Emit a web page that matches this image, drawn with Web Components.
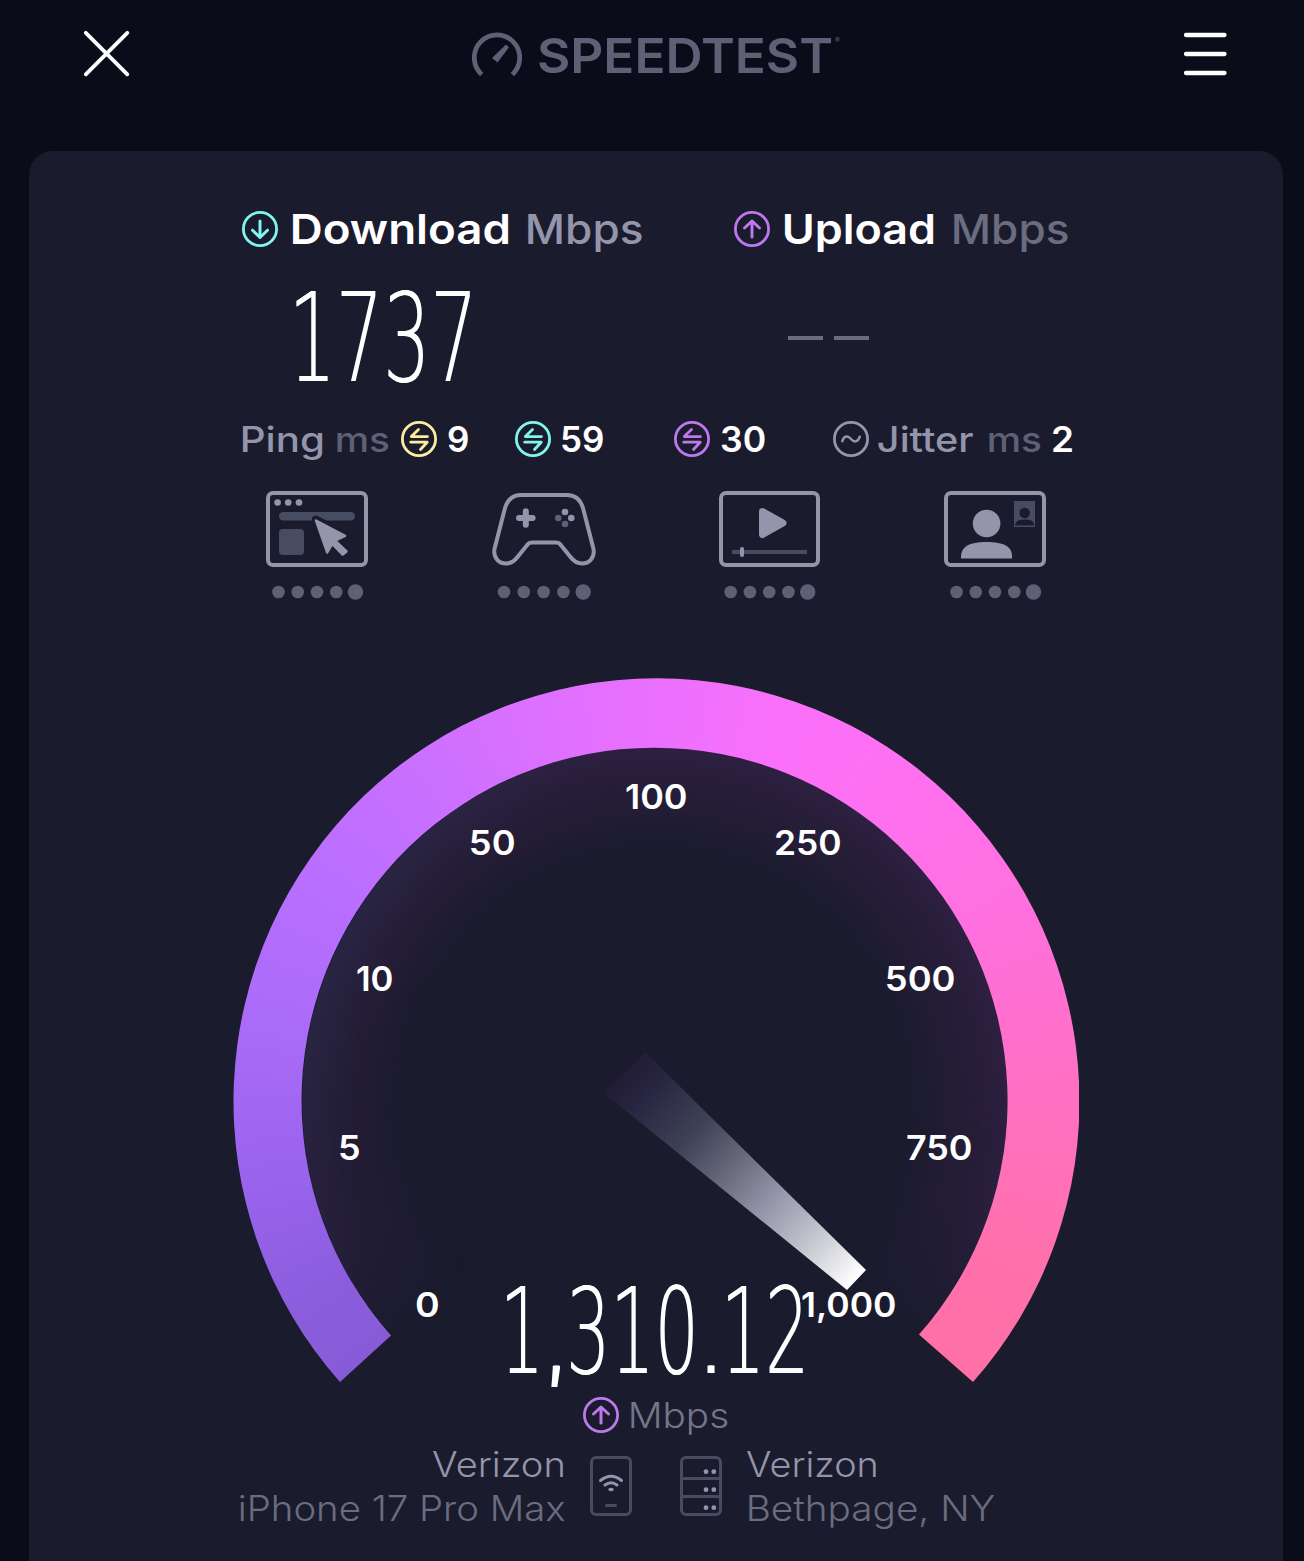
<!DOCTYPE html>
<html lang="en">
<head>
<meta charset="utf-8">
<title>Speedtest</title>
<style>
html{background:#0a0c1a}
body{margin:0;color:#fff;font-family:Inter,"Liberation Sans",sans-serif}
</style>
</head>
<body>
<speed-app></speed-app>
<script>
const ctx = document.createElement('canvas').getContext('2d');

function define(name, html, after) {
  const t = document.createElement('template');
  t.innerHTML = html;
  customElements.define(name, class extends HTMLElement {
    connectedCallback() {
      if (this.shadowRoot) return;
      this.attachShadow({mode: 'open'}).append(t.content.cloneNode(true));
      if (after) after(this, this.shadowRoot);
    }
  });
}

/* Text whose ink spans exactly w pixels; the host's bottom edge is the baseline. */
define('fit-text', `<style>
:host{display:block;flex:none}
:host([digits]){text-shadow:1.300px 0 currentColor}
span{display:block;width:max-content;white-space:pre;transform-origin:0 0}
</style><span><slot></slot></span>`, (el, root) => {
  const a = (n, d) => el.getAttribute(n) || d;
  const digits = el.hasAttribute('digits');
  const w = +a('w'), h = +a('h', 26), size = +a('size', 35), weight = a('weight', 570);
  const family = digits ? '"DejaVu Sans"' : 'Inter';
  ctx.font = weight + ' ' + size + 'px ' + family + ', sans-serif';
  const m = ctx.measureText(el.textContent);
  const s = w / (m.actualBoundingBoxLeft + m.actualBoundingBoxRight);
  const lh = Math.round(size * (digits ? .8 : 1.2));
  const base = (lh + m.fontBoundingBoxAscent - m.fontBoundingBoxDescent) / 2;
  el.style.width = w + 'px';
  el.style.height = h + 'px';
  if (a('c')) el.style.color = a('c');
  const sp = root.querySelector('span');
  sp.style.font = weight + ' ' + size + 'px/' + lh + 'px ' + family + ', sans-serif';
  sp.style.transform = 'translate(' + m.actualBoundingBoxLeft * s + 'px,' + (h - base) + 'px) scaleX(' + s + ')';
});

const glyphs = {
  down: '<path d="M18 10v16M10.500 19.200l7.500 7.300 7.500-7.300"/>',
  up: '<path d="M18 26V10M10.500 17l7.500-7 7.500 7"/>',
  ping: '<path d="M26.500 15.600H10.300L17.500 8.500M9.700 21.200H26.200L19.500 28.500" stroke-width="2.800"/>',
  wave: '<path d="M9.300 20.200c2-6 5.800-5.500 8.700-2.200s6.700 3.800 8.800-2.300" stroke-width="2.500"/>'
};
define('ring-icon', `<style>
:host{display:block;flex:none;width:36px;height:36px}svg{display:block}
</style><svg width="36" height="36" fill="none" stroke="currentColor" stroke-width="3" stroke-linecap="round" stroke-linejoin="round"><circle cx="18" cy="18" r="16.600" stroke-width="2.800"/><g></g></svg>`,
(el, root) => {
  el.style.color = el.getAttribute('c');
  root.querySelector('g').innerHTML = glyphs[el.getAttribute('kind')];
});

define('app-header', `<style>
:host{display:flex;height:151px;box-sizing:border-box;padding:30px 77px 0 83px;align-items:flex-start;justify-content:space-between}
svg{display:block;flex:none}
.logo{display:flex;align-items:flex-start;color:#5f6075;margin-left:-1px}
.logo svg{margin-top:1px}
.name{margin:8px 0 0 17px}.reg{margin:8px 0 0 3px}
.menu{margin-top:2px}
</style>
<svg width="47" height="47" stroke="#fff" stroke-width="3.800" stroke-linecap="round"><path d="M2.800 2.800l41.500 41.500M44.300 2.800L2.800 44.300"/></svg>
<div class="logo">
<svg width="50" height="50" fill="none"><path d="M9.700 43.400A22.700 22.700 0 1 1 40.300 43.400" stroke="#5f6075" stroke-width="4.800"/><path d="M34 13.500l3 2.800L25.500 31.500 20 27z" fill="#5f6075"/></svg>
<fit-text class="name" w="293" h="35" size="48.500">SPEEDTEST</fit-text>
<fit-text class="reg" w="5" h="5" size="7" weight="500">®</fit-text>
</div>
<svg class="menu" width="44" height="45" stroke="#fff" stroke-width="4.300" stroke-linecap="round"><path d="M3 3h38.500M3 22h38.500M3 41h38.500"/></svg>`);

define('speed-results', `<style>
:host{display:block;padding:60px 0 0 213px}
.row{display:flex;align-items:center}
.values{display:flex;align-items:center;margin-top:44px;padding-left:54px;height:90px}
.pending{display:flex;gap:11px;margin-left:319px;margin-top:4px}
.pending i{width:35px;height:4px;background:#6b6c80}
.ping{margin-top:40px;margin-left:-1px}
</style>
<div class="row">
<ring-icon kind="down" c="#80f5ee"></ring-icon>
<fit-text style="margin-left:15px" w="216" h="30" size="41.500">Download</fit-text>
<fit-text style="margin-left:19px" w="114" h="30" size="41.500" weight="550" c="#9495aa">Mbps</fit-text>
<ring-icon style="margin-left:92px" kind="up" c="#bd78ee"></ring-icon>
<fit-text style="margin-left:15px" w="149" h="30" size="41.500">Upload</fit-text>
<fit-text style="margin-left:20px" w="114" h="30" size="41.500" weight="550" c="#6b6c80">Mbps</fit-text>
</div>
<div class="values">
<fit-text w="173" h="90" size="123.500" weight="200" digits>1737</fit-text>
<div class="pending"><i></i><i></i></div>
</div>
<div class="row ping">
<fit-text w="81" c="#9495aa" weight="530" style="margin-left:1px">Ping</fit-text>
<fit-text w="52" c="#5f6075" weight="530" style="margin-left:14px">ms</fit-text>
<ring-icon kind="ping" c="#fbeca0" style="margin-left:12px"></ring-icon>
<fit-text w="20" style="margin-left:11px">9</fit-text>
<ring-icon kind="ping" c="#80f5ee" style="margin-left:47px"></ring-icon>
<fit-text w="41" style="margin-left:11px">59</fit-text>
<ring-icon kind="ping" c="#bd78ee" style="margin-left:71px"></ring-icon>
<fit-text w="44" style="margin-left:11px">30</fit-text>
<ring-icon kind="wave" c="#9495aa" style="margin-left:68px"></ring-icon>
<fit-text w="95" c="#9495aa" weight="530" style="margin-left:9px">Jitter</fit-text>
<fit-text w="52" c="#5f6075" weight="530" style="margin-left:16px">ms</fit-text>
<fit-text w="19" style="margin-left:12px">2</fit-text>
</div>`);

const art = {
  web: '<rect x="2" y="2" width="98" height="72" rx="5"/><g stroke="none"><g fill="#9495aa"><circle cx="11.600" cy="11.500" r="3.300"/><circle cx="22.200" cy="11.500" r="3.300"/><circle cx="33" cy="11.500" r="3.300"/></g><rect x="13" y="21" width="76" height="8.600" rx="4.300" fill="#484c60"/><rect x="13" y="38" width="25" height="26" rx="4" fill="#484c60"/><path d="M50 28.500L79 44.500 69.500 50 80.500 61 77 64.200 66.500 53.500 61.500 62z" fill="#1b1b2e" stroke="#1b1b2e" stroke-width="8" stroke-linejoin="round"/><path d="M50 29.500L79 44.800 69.200 49.700 80.500 60.500 76.700 63.600 66.200 52.800 61.200 61.500z" fill="#9495aa" stroke="#9495aa" stroke-width="2.500" stroke-linejoin="round"/></g>',
  game: '<path d="M29 4H75C83 4 88.500 9 91 17L101.500 58C103 67 97 72.500 90 72.500C85 72.500 81.500 70 78.500 66L68 53Q66.500 51.500 64 51.500H40Q37.500 51.500 36 53L25.500 66C22.500 70 19 72.500 14 72.500C7 72.500 1 67 2.500 58L13 17C15.500 9 21 4 29 4z"/><path d="M27 27h13.600M33.800 20.200v13.600" stroke-width="6" stroke-linecap="round"/><g stroke="none"><circle cx="73" cy="21" r="3.300" fill="#9495aa"/><circle cx="79.300" cy="27" r="3.300" fill="#9495aa"/><circle cx="66.300" cy="27" r="3.300" fill="#5f6075"/><circle cx="73" cy="33" r="3.300" fill="#5f6075"/></g>',
  video: '<rect x="2" y="2" width="97" height="72" rx="5"/><path d="M43.500 20.500L64 32 43.500 43.500z" fill="#9495aa" stroke-width="7" stroke-linejoin="round"/><path d="M13 61h75" stroke="#484c60"/><path d="M23 58v6" stroke-linecap="round"/>',
  chat: '<rect x="2" y="2" width="98" height="72" rx="5"/><g stroke="none"><circle cx="42.600" cy="32.500" r="13.800" fill="#9495aa"/><path d="M17 67.500c-.5-12 8-16.500 25.500-16.500S69 55.500 68 67.500z" fill="#9495aa"/><rect x="70" y="10" width="21" height="26" fill="#484c60"/><circle cx="80.700" cy="22" r="5.300" fill="#1b1b2e"/><path d="M71 34.600c0-4.500 4-6 9.700-6s9.300 1.500 9.300 6z" fill="#1b1b2e"/></g>'
};
define('quality-item', `<style>
:host{display:block;flex:none;width:104px}svg{display:block;overflow:visible}.dots{margin-top:17px;margin-left:6px}
</style><svg class="art" width="104" height="76" fill="none" stroke="#9495aa" stroke-width="4"></svg>
<svg class="dots" width="92" height="16" fill="#5f6075"></svg>`,
(el, root) => {
  root.querySelector('.art').innerHTML = art[el.getAttribute('kind')];
  const pitch = +(el.getAttribute('pitch') || 19.25), start = +(el.getAttribute('start') || 6.5);
  root.querySelector('.dots').innerHTML = [0, 1, 2, 3, 4].map(i =>
    '<circle cx="' + (start + i * pitch) + '" cy="8" r="' + (i === 4 ? 7.7 : 6.3) + '"/>').join('');
});

define('quality-row', `<style>
:host{display:flex;padding:34px 0 0 237px;gap:122px}
</style><quality-item kind="web"></quality-item><quality-item kind="game" start="6" pitch="19.800"></quality-item><quality-item kind="video" start="5.700" style="margin-left:1px"></quality-item><quality-item kind="chat" style="margin-left:-1px"></quality-item>`);

/* Dial canvas: 846 x 704, centre of the arc at 423,423. */
define('speed-gauge', `<style>
:host{display:block;position:relative;width:846px;height:704px;margin:78px 0 0 204px}
.arc,.glow,svg,fit-text{position:absolute}
.arc,.glow{left:0;top:0;width:846px;height:846px}
.arc{background:conic-gradient(from 228deg,#875bd8 0deg,#8b5ddd 12deg,#9963ec 30deg,#a96bf8 52deg,#b96eff 75deg,#cb70ff 98deg,#e070ff 118deg,#ec70fe 134deg,#fb70fa 152deg,#ff70f0 170deg,#ff70dc 196deg,#ff70c2 222deg,#ff70ac 245deg,#ff70a6 264deg,#ff70a6 300deg,#875bd8 330deg);
clip-path:path("M107 704A423 423 0 1 1 740 704L686 656.500A353 353 0 1 0 158 657.500Z")}
.glow{background:radial-gradient(circle at 423px 423px,#1b1b2e00 245px,#281e3880 300px,transparent 354px),radial-gradient(circle at 423px 423px,transparent 270px,#2f2042 353px,transparent 354px);-webkit-mask-image:conic-gradient(from 228deg,transparent 0deg,#0009 18deg,#000c 50deg,#000 85deg,#000 215deg,#000c 240deg,transparent 264deg);mask-image:conic-gradient(from 228deg,transparent 0deg,#0009 18deg,#000c 50deg,#000 85deg,#000 215deg,#000c 240deg,transparent 264deg)}
.cool{background:radial-gradient(circle at 423px 423px,transparent 300px,#272643 353px,transparent 354px);-webkit-mask-image:conic-gradient(from 228deg,transparent 10deg,#000c 50deg,#000c 85deg,transparent 125deg);mask-image:conic-gradient(from 228deg,transparent 10deg,#000c 50deg,#000c 85deg,transparent 125deg)}
svg{left:0;top:0}
.mark{text-shadow:2px 0,4px 0,6px 0}
</style>
<div class="glow"></div><div class="glow cool"></div><div class="arc"></div>
<svg width="846" height="704"><defs><linearGradient id="n" gradientUnits="userSpaceOnUse" x1="390" y1="394" x2="623" y2="602"><stop offset="0" stop-color="#231c34"/><stop offset=".1" stop-color="#272541"/><stop offset=".3" stop-color="#3f4256"/><stop offset=".43" stop-color="#5f6173"/><stop offset=".63" stop-color="#9495a8"/><stop offset=".82" stop-color="#c7c8d1"/><stop offset="1" stop-color="#fff"/></linearGradient></defs>
<path d="M412 374L633 592 614 612 371 415Z" fill="url(#n)"/></svg>
<fit-text style="left:183px;top:614px" w="22" h="25" size="34">0</fit-text>
<fit-text style="left:107px;top:457px" w="19" h="25" size="34">5</fit-text>
<fit-text style="left:124px;top:288px" w="35" h="25" size="34">10</fit-text>
<fit-text style="left:238px;top:152px" w="43" h="25" size="34">50</fit-text>
<fit-text style="left:393px;top:106px" w="60" h="25" size="34">100</fit-text>
<fit-text style="left:543px;top:152px" w="64" h="25" size="34">250</fit-text>
<fit-text style="left:654px;top:288px" w="67" h="25" size="34">500</fit-text>
<fit-text style="left:674px;top:457px" w="64" h="25" size="34">750</fit-text>
<fit-text style="left:569px;top:614px" w="93" h="25" size="34">1,000</fit-text>
<fit-text style="left:274px;top:608px" w="295" h="87" size="119" weight="200" digits>1<span class="mark">,</span>310<span class="mark">.</span>12</fit-text>`);

define('gauge-unit', `<style>
:host{display:flex;align-items:center;padding:15px 0 0 554px}
</style><ring-icon kind="up" c="#bd78ee"></ring-icon><fit-text style="margin-left:12px" w="97" h="25" size="35" weight="300" c="#75768a">Mbps</fit-text>`);

define('connection-info', `<style>
:host{display:flex;padding:19px 0 0 210px;height:90px}
.txt{display:flex;flex-direction:column;gap:19px;color:#6b6c80}
.dev{align-items:flex-end;width:326px}
svg{display:block;flex:none;margin-top:4px}
.phone{margin-left:25px;margin-right:48px}.server{margin-right:25px}
</style>
<div class="txt dev"><fit-text style="margin-right:2px" w="131" h="25" size="35" weight="300" c="#9495aa">Verizon</fit-text><fit-text w="325" h="25" size="35" weight="300">iPhone 17 Pro Max</fit-text></div>
<svg class="phone" width="42" height="60" fill="none" stroke="#484c60" stroke-width="3" stroke-linecap="round"><rect x="1.500" y="1.500" width="39" height="57" rx="4.500"/><path d="M16.500 49.500h9"/><g stroke="#9495aa"><path d="M10.500 24.500q10.500-8.500 21 0M15 29q6-4.500 12 0"/><ellipse cx="21" cy="33.500" rx="2.800" ry="1.800" fill="#9495aa" stroke="none"/></g></svg>
<svg class="server" width="42" height="60" fill="none" stroke="#484c60" stroke-width="3"><rect x="1.500" y="1.500" width="39" height="57" rx="4.500"/><path d="M2 22.500h38M2 40.500h38"/><g fill="#9495aa" stroke="none"><circle cx="26" cy="15.700" r="2.400"/><circle cx="33.800" cy="15.700" r="2.400"/><circle cx="26" cy="33.700" r="2.400"/><circle cx="33.800" cy="33.700" r="2.400"/><circle cx="26" cy="51.700" r="2.400"/><circle cx="33.800" cy="51.700" r="2.400"/></g></svg>
<div class="txt"><fit-text style="margin-left:-1px" w="130" h="25" size="35" weight="300" c="#9495aa">Verizon</fit-text><fit-text style="margin-left:2px" w="246" h="25" size="35" weight="300">Bethpage, NY</fit-text></div>`);

define('speed-app', `<style>
:host{display:block;width:1304px;height:1561px;overflow:hidden;background:#0a0c1a}
main{box-sizing:border-box;margin:0 21px 0 29px;height:1410px;background:#1b1b2e;border-radius:24px 24px 0 0;overflow:hidden}
</style><app-header></app-header><main><speed-results></speed-results><quality-row></quality-row><speed-gauge></speed-gauge><gauge-unit></gauge-unit><connection-info></connection-info></main>`);
</script>
</body>
</html>
